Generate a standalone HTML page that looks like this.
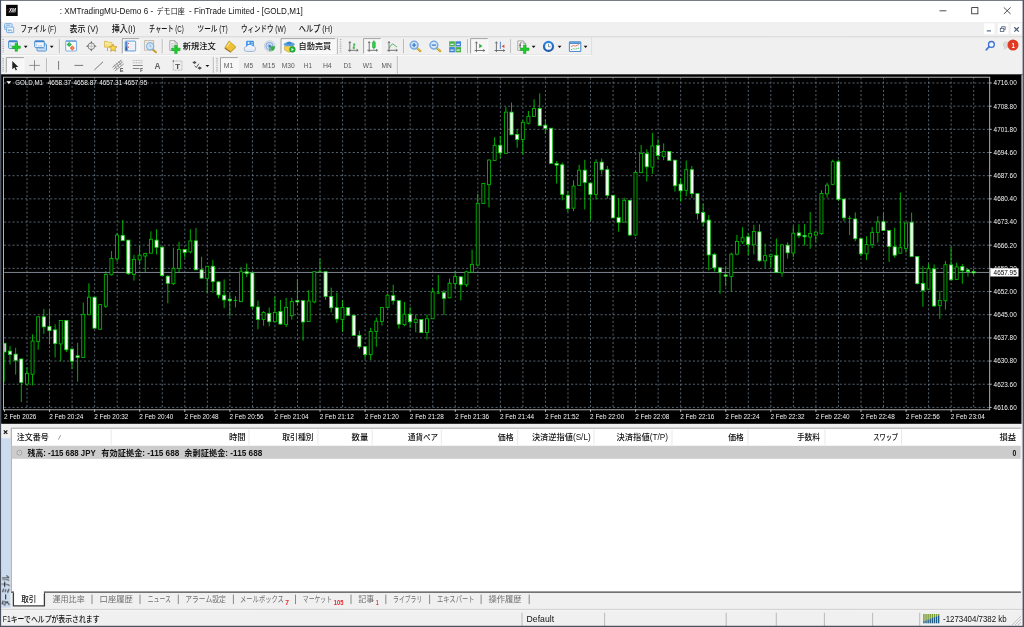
<!DOCTYPE html>
<html lang="ja"><head><meta charset="utf-8"><title>XMTradingMU-Demo 6 - GOLD,M1</title>
<style>
html,body{margin:0;padding:0;}
body{width:1024px;height:627px;overflow:hidden;background:#f0f0f0;position:relative;font-family:"Liberation Sans","Noto Sans CJK JP",sans-serif;}
svg{display:block;position:absolute;left:0;will-change:transform;}
.win{position:absolute;left:0;top:0;width:1024px;height:627px;overflow:hidden;}
.titlebar{position:absolute;left:0;top:0;width:1024px;height:22px;background:#fff;}
.menubar{position:absolute;left:0;top:22px;width:1024px;height:14px;background:#f0f0f0;}
.toolbar1{position:absolute;left:0;top:36px;width:1024px;height:19px;background:#f0f0f0;}
.toolbar2{position:absolute;left:0;top:55px;width:1024px;height:19px;background:#f0f0f0;}
.chartwrap{position:absolute;left:0;top:74px;width:1024px;height:350px;}
.terminal{position:absolute;left:0;top:424px;width:1024px;height:184px;background:#f0f0f0;}
.statusbar{position:absolute;left:0;top:608px;width:1024px;height:19px;background:#f0f0f0;}
.frame{position:absolute;left:0;top:0;pointer-events:none;}
.titlebar svg,.menubar svg,.toolbar1 svg,.toolbar2 svg,.chartwrap svg,.terminal svg,.statusbar svg{top:0;}
</style></head><body>
<div class="win">
<div class="titlebar">
<svg width="1024" height="22" viewBox="0 0 1024 22" font-family="Liberation Sans, Noto Sans CJK JP, sans-serif">
<rect x="6.1" y="4.8" width="11.6" height="11.2" fill="#050505"/>
<path d="M7.6 8.8l1.1 1l-1.1 1z" fill="#e0182d"/>
<text x="8.90" y="11.92" font-size="5.6" fill="#fff" font-weight="700" textLength="6.90" lengthAdjust="spacingAndGlyphs" font-style="italic">XM</text>
<rect x="8.5" y="11.9" width="7" height="0.6" fill="#8a8a8a"/>
<text x="59.80" y="14.10" font-size="8.6" fill="#151515" textLength="93.40" lengthAdjust="spacingAndGlyphs">: XMTradingMU-Demo 6 -</text>
<text x="156.60" y="13.94" font-size="7.6" fill="#151515" textLength="28.10" lengthAdjust="spacingAndGlyphs">デモ口座</text>
<text x="189.00" y="14.10" font-size="8.6" fill="#151515" textLength="113.70" lengthAdjust="spacingAndGlyphs">- FinTrade Limited - [GOLD,M1]</text>
<path d="M939.5 10.8h6.9" stroke="#222" stroke-width="0.8" fill="none"/>
<rect x="971.7" y="7.6" width="6.2" height="6.2" stroke="#222" stroke-width="0.8" fill="none"/>
<path d="M1003.8 7.4l6.8 6.6M1010.6 7.4l-6.8 6.6" stroke="#222" stroke-width="0.8" fill="none"/>
</svg>
</div>
<div class="menubar">
<svg width="1024" height="14" viewBox="0 22 1024 14" font-family="Liberation Sans, Noto Sans CJK JP, sans-serif">
<rect x="4.7" y="23.7" width="7.3" height="5.8" rx="0.6" fill="#f2f7fd" stroke="#6aa4e6" stroke-width="0.9"/>
<path d="M6 25.2h4.4M6 26.2v1.8" stroke="#5b9bd5" stroke-width="0.9" fill="none"/>
<rect x="6.7" y="27.1" width="7" height="5.5" rx="0.6" fill="#f2f7fd" stroke="#6aa4e6" stroke-width="0.9"/>
<path d="M8.4 29.2v1.8h1.4v-1.8M11 29.2v1.8h1.4" stroke="#5b9bd5" stroke-width="0.7" fill="none"/>
<text x="20.40" y="31.90" font-size="8.6" fill="#111" font-weight="500" textLength="35.80" lengthAdjust="spacingAndGlyphs">ファイル (F)</text>
<text x="69.50" y="31.90" font-size="8.6" fill="#111" font-weight="500" textLength="28.60" lengthAdjust="spacingAndGlyphs">表示 (V)</text>
<text x="111.80" y="31.90" font-size="8.6" fill="#111" font-weight="500" textLength="23.70" lengthAdjust="spacingAndGlyphs">挿入(I)</text>
<text x="149.10" y="31.90" font-size="8.6" fill="#111" font-weight="500" textLength="34.60" lengthAdjust="spacingAndGlyphs">チャート (C)</text>
<text x="197.50" y="31.90" font-size="8.6" fill="#111" font-weight="500" textLength="30.20" lengthAdjust="spacingAndGlyphs">ツール (T)</text>
<text x="240.90" y="31.90" font-size="8.6" fill="#111" font-weight="500" textLength="45.00" lengthAdjust="spacingAndGlyphs">ウィンドウ (W)</text>
<text x="298.80" y="31.90" font-size="8.6" fill="#111" font-weight="500" textLength="33.50" lengthAdjust="spacingAndGlyphs">ヘルプ (H)</text>
<rect x="984" y="23.4" width="10.6" height="10.8" fill="#fff"/>
<rect x="997.8" y="23.4" width="10.6" height="10.8" fill="#fff"/>
<rect x="1010.9" y="23.4" width="10.6" height="10.8" fill="#fff"/>
<path d="M986.8 30.9h4.2" stroke="#4a5a78" stroke-width="1.1" fill="none"/>
<path d="M1001.6 28.3v-1.6h3.6v3h-1.4" stroke="#4a5a78" stroke-width="0.8" fill="none"/><rect x="1000.3" y="28.3" width="3.5" height="3.1" stroke="#4a5a78" stroke-width="0.8" fill="none"/>
<path d="M1014.3 27.3l4.5 4.3M1018.8 27.3l-4.5 4.3" stroke="#4a5a78" stroke-width="1.2" fill="none"/>
</svg>
</div>
<div class="toolbar1">
<svg width="1024" height="19" viewBox="0 36 1024 19" font-family="Liberation Sans, Noto Sans CJK JP, sans-serif">
<path d="M0 36.8H1024" stroke="#cfcfcf" stroke-width="0.8"/>
<g transform="translate(0 0.1)"><path d="M3.20 39V52.5" stroke="#b4b4b4" stroke-width="1.6" stroke-dasharray="0.9 0.9" fill="none"/>
<rect x="8.6" y="40.9" width="8.8" height="7.4" rx="0.9" fill="#e6f0fb" stroke="#4f8fd0" stroke-width="1"/><rect x="8.6" y="40.5" width="8.8" height="1.6" rx="0.6" fill="#3f83cf"/><path d="M10.4 43.6v3M11.6 44.8v1.8" stroke="#9bb9dc" stroke-width="0.7"/>
<path d="M15.10 43.10h2.4v2.80h2.80v2.4h-2.80v2.80h-2.4v-2.80h-2.80v-2.4h2.80z" fill="#1fcc2c" stroke="#0f9a1c" stroke-width="0.5"/>
<path d="M23.80 45.70h3.8l-1.9 2.1z" fill="#111"/>
<rect x="37" y="43.7" width="9.4" height="7.2" rx="0.9" fill="#dbe8f6" stroke="#4f8fd0" stroke-width="1"/><path d="M38.6 48.6h6.6" stroke="#8db4e0" stroke-width="0.8"/>
<rect x="34.7" y="40.9" width="9.6" height="6.6" rx="0.9" fill="#f2f7fd" stroke="#4f8fd0" stroke-width="1"/><rect x="34.7" y="40.5" width="9.6" height="1.6" rx="0.6" fill="#3f83cf"/><path d="M36.6 43.4v2.8M37.8 45.8h4.6M41 45v0.8" stroke="#9bb9dc" stroke-width="0.7" fill="none"/>
<path d="M49.80 45.70h3.8l-1.9 2.1z" fill="#111"/>
<path d="M59.40 39V53" stroke="#a8a8a8" stroke-width="0.9" fill="none"/><path d="M60.20 39V53" stroke="#fbfbfb" stroke-width="0.7" fill="none"/>
<rect x="65.7" y="41" width="10.8" height="9.9" rx="0.9" fill="#fdfdfd" stroke="#7fb2e6" stroke-width="1.1"/><path d="M66 40.9h10.2" stroke="#4f8fd0" stroke-width="0.9"/>
<path d="M69.2 41.8l2.6 2.6l-2.6 2.6l-2.6-2.6z" fill="#22b040"/><path d="M72.3 45.4l2.6 2.6l-2.6 2.6l-2.6-2.6z" fill="#f06a3c"/><path d="M69.2 43.4v2M72.3 47v2" stroke="#d9f3de" stroke-width="0.5"/>
<circle cx="91.3" cy="46.1" r="3.3" fill="none" stroke="#707070" stroke-width="0.8"/><path d="M91.3 40.6l1.1 2.6h-2.2zM91.3 51.6l1.1-2.6h-2.2zM85.8 46.1l2.6-1.1v2.2zM96.8 46.1l-2.6-1.1v2.2z" fill="#707070"/><path d="M91.3 43v6.2M88.2 46.1h6.2" stroke="#9a9a9a" stroke-width="0.5"/>
<path d="M104.5 41.2h2.8l0.9 1h3.7v4.9h-7.4z" fill="#f6e27e" stroke="#d4aa30" stroke-width="0.6"/><path d="M104.9 43.2h6.6" stroke="#fbf3b8" stroke-width="0.8"/><path d="M107.5 47.4v3.6" stroke="#8a8a8a" stroke-width="0.7"/>
<path d="M113.1 44l1.15 2.45l2.65 0.3l-1.95 1.85l0.55 2.65l-2.4-1.35l-2.4 1.35l0.55-2.65l-1.95-1.85l2.65-0.3z" fill="#f7dc4e" stroke="#c08a18" stroke-width="0.7"/>
<rect x="122.3" y="38.5" width="17.10" height="15.10" fill="#f7f7f7"/><path d="M122.3 53.6V38.5H139.4" stroke="#8e8e8e" stroke-width="0.8" fill="none"/><path d="M122.3 53.6H139.4V38.5" stroke="#fdfdfd" stroke-width="0.8" fill="none"/>
<defs><linearGradient id="tg" x1="0" y1="0" x2="0" y2="1"><stop offset="0" stop-color="#6fa9e4"/><stop offset="1" stop-color="#2c62b2"/></linearGradient></defs>
<rect x="125.1" y="41" width="10.5" height="9.8" rx="1" fill="#f6f9fe" stroke="#79aee6" stroke-width="1.1"/><rect x="125.3" y="41.3" width="2.3" height="9.2" fill="url(#tg)"/><path d="M128.2 44.6h6.9M128.2 46.6h6.9M128.2 48.6h6.9" stroke="#d3e0f3" stroke-width="0.6"/><path d="M128.5 42.8v1.1M128.5 46.6v1.1" stroke="#e8463a" stroke-width="0.9"/><path d="M126.4 42.4v1.2M126.4 47v2.6" stroke="#1b3f78" stroke-width="0.7"/>
<rect x="144.7" y="40.6" width="9" height="9.4" fill="#f7f5f0" stroke="#b3ab9b" stroke-width="0.8"/><path d="M145.2 42.2h8" stroke="#d8d2c6" stroke-width="0.7"/>
<path d="M153 49.6l3 2.6" stroke="#c79a22" stroke-width="1.8" stroke-linecap="round"/><circle cx="150.1" cy="46.2" r="3.7" fill="#cfe4f6" stroke="#74abe0" stroke-width="1"/><path d="M150.1 44.4v2h1.4" stroke="#8c9db4" stroke-width="0.6" fill="none"/>
<path d="M162.30 39V53" stroke="#a8a8a8" stroke-width="0.9" fill="none"/><path d="M163.10 39V53" stroke="#fbfbfb" stroke-width="0.7" fill="none"/>
<path d="M169.8 40.6h5l2.5 2.5v7.1h-7.5z" fill="#fbfbfb" stroke="#858585" stroke-width="0.7"/><path d="M174.8 40.6v2.5h2.5" fill="none" stroke="#858585" stroke-width="0.6"/><path d="M171 43.3h2.6M171 45h4.8M171 46.7h4.8M171 48.4h2" stroke="#9a9a9a" stroke-width="0.6"/>
<path d="M174.65 45.10h2.5v2.95h2.95v2.5h-2.95v2.95h-2.5v-2.95h-2.95v-2.5h2.95z" fill="#1fcc2c" stroke="#0f9a1c" stroke-width="0.5"/>
<path d="M224.9 47.4l4.2-6.6l6.6 5.8l-4.9 5z" fill="#eec238" stroke="#b98a1c" stroke-width="0.6"/><path d="M224.9 47.4l5.9 4.2l-0.2 1.1l-6-4.1z" fill="#9a6a1a"/><path d="M230.8 51.6l4.9-5l0.1 1l-5.2 5.1z" fill="#c8962a"/><path d="M227.4 46.4l2.4-3.8" stroke="#fdeea0" stroke-width="1"/>
<path d="M246.6 51.4a2.5 2.5 0 0 1 0.1-5a3.4 3.4 0 0 1 6.4-0.6a2.9 2.9 0 0 1 0.5 5.6z" fill="#e1e8f2" stroke="#8ea3c2" stroke-width="0.7"/>
<rect x="246.1" y="40.7" width="7.8" height="6" rx="1" fill="#3f92e6"/><circle cx="248.6" cy="42.8" r="1.05" fill="#eaf4fe"/><path d="M246.9 46.4q1.7-2.6 3.4 0z" fill="#eaf4fe"/><path d="M250.8 42.6h2.2M250.8 44.2h2.2" stroke="#eaf4fe" stroke-width="0.6"/>
<path d="M245.4 49.2a2 2 0 0 1 1.6-2.6a3.2 3.2 0 0 1 5.8-0.4a2.6 2.6 0 0 1 2.2 3z" fill="#eef2f8" stroke="none"/>
<circle cx="269.7" cy="46" r="5.4" fill="#e4e9f0" stroke="#b4bfcd" stroke-width="0.6"/><circle cx="269.5" cy="45.9" r="3.6" fill="none" stroke="#6d9bd8" stroke-width="0.9"/><circle cx="269.5" cy="45.9" r="1.9" fill="none" stroke="#8fb2e2" stroke-width="0.6"/>
<path d="M270.4 46.2l4.6 0a5 5 0 0 1 -3.4 5z" fill="#3aae4a"/><path d="M270 46v5.2" stroke="#2f9a40" stroke-width="1.1"/><circle cx="269.6" cy="45.8" r="1.2" fill="#3c78cf"/>
<rect x="281" y="38.5" width="54.30" height="15.10" fill="#f7f7f7"/><path d="M281 53.6V38.5H335.3" stroke="#8e8e8e" stroke-width="0.8" fill="none"/><path d="M281 53.6H335.3V38.5" stroke="#fdfdfd" stroke-width="0.8" fill="none"/>
<path d="M284.4 46.2l4.6-1.2l5 1.6l-0.6 4.4l-4.6 1.2l-4.2-2.2z" fill="#f3d04e" stroke="#b8921f" stroke-width="0.5"/><ellipse cx="289.2" cy="44.2" rx="5.4" ry="2" fill="#5aa2e0"/><ellipse cx="289.2" cy="42.9" rx="2.6" ry="1.5" fill="#3d86cf"/><circle cx="292.4" cy="49.3" r="2.9" fill="#21b43a" stroke="#128a26" stroke-width="0.4"/><path d="M291.5 47.8l2.4 1.5l-2.4 1.5z" fill="#fff"/>
<path d="M337.60 38V54" stroke="#a8a8a8" stroke-width="0.9" fill="none"/><path d="M338.40 38V54" stroke="#fbfbfb" stroke-width="0.7" fill="none"/>
<path d="M340.60 39V52.5" stroke="#b4b4b4" stroke-width="1.6" stroke-dasharray="0.9 0.9" fill="none"/>
<path d="M349.8 41.80V51.80M348.00 50.2H358.00" stroke="#555" stroke-width="0.8" fill="none"/><path d="M348.70 43.00L349.8 41.40L350.90 43.00M356.60 49.10L358.20 50.2L356.60 51.30" stroke="#555" stroke-width="0.7" fill="none"/>
<path d="M354 43.4v5.4M354 44.2h1.3M352.7 47.8h1.3" stroke="#2fae3d" stroke-width="1.2" fill="none"/>
<rect x="363.6" y="38.5" width="17.30" height="15.10" fill="#f7f7f7"/><path d="M363.6 53.6V38.5H380.9" stroke="#8e8e8e" stroke-width="0.8" fill="none"/><path d="M363.6 53.6H380.9V38.5" stroke="#fdfdfd" stroke-width="0.8" fill="none"/>
<path d="M369.2 41.80V51.80M367.40 50.2H377.40" stroke="#555" stroke-width="0.8" fill="none"/><path d="M368.10 43.00L369.2 41.40L370.30 43.00M376.00 49.10L377.60 50.2L376.00 51.30" stroke="#555" stroke-width="0.7" fill="none"/>
<path d="M373.9 40.2v9" stroke="#1f9a30" stroke-width="0.7"/><rect x="372.5" y="41.6" width="2.8" height="6.2" rx="0.7" fill="#2fd04a" stroke="#1f9a30" stroke-width="0.5"/>
<path d="M389 41.80V51.80M387.20 50.2H397.20" stroke="#555" stroke-width="0.8" fill="none"/><path d="M387.90 43.00L389 41.40L390.10 43.00M395.80 49.10L397.40 50.2L395.80 51.30" stroke="#555" stroke-width="0.7" fill="none"/>
<path d="M389.2 48.2q1.4-3.6 3.6-4.4l4.2 3.2" stroke="#3aa646" stroke-width="0.8" fill="none"/>
<path d="M403.70 39V53" stroke="#a8a8a8" stroke-width="0.9" fill="none"/><path d="M404.50 39V53" stroke="#fbfbfb" stroke-width="0.7" fill="none"/>
<path d="M417.00 48.00L420.40 51.00" stroke="#c49a24" stroke-width="2.2" stroke-linecap="round"/><path d="M417.20 47.90L420.40 50.70" stroke="#f0d45c" stroke-width="0.9" stroke-linecap="round"/><circle cx="414.1" cy="45.0" r="3.7" fill="#dcebfa" stroke="#7fb0e6" stroke-width="1.3"/><circle cx="414.1" cy="45.0" r="4.3" fill="none" stroke="#4f8fd6" stroke-width="0.4"/><path d="M412.00 45.0h4.2M414.1 42.90v4.2" stroke="#3c78c8" stroke-width="1.3"/>
<path d="M436.80 48.00L440.20 51.00" stroke="#c49a24" stroke-width="2.2" stroke-linecap="round"/><path d="M437.00 47.90L440.20 50.70" stroke="#f0d45c" stroke-width="0.9" stroke-linecap="round"/><circle cx="433.9" cy="45.0" r="3.7" fill="#dcebfa" stroke="#7fb0e6" stroke-width="1.3"/><circle cx="433.9" cy="45.0" r="4.3" fill="none" stroke="#4f8fd6" stroke-width="0.4"/><path d="M431.80 45.0h4.2" stroke="#3c78c8" stroke-width="1.3"/>
<rect x="449.2" y="41.2" width="5.6" height="5.2" fill="#4bb04a"/><rect x="455.4" y="41.2" width="5.6" height="5.2" fill="#3f80d8"/><rect x="449.2" y="47" width="5.6" height="5.2" fill="#3f80d8"/><rect x="455.4" y="47" width="5.6" height="5.2" fill="#4bb04a"/>
<path d="M450.4 44.2h3.2M456.6 44.2h3.2M450.4 50h3.2M456.6 50h3.2" stroke="#e8f0fa" stroke-width="1.3"/>
<path d="M467.50 39V53" stroke="#a8a8a8" stroke-width="0.9" fill="none"/><path d="M468.30 39V53" stroke="#fbfbfb" stroke-width="0.7" fill="none"/>
<rect x="470.6" y="38.5" width="17.30" height="15.10" fill="#f7f7f7"/><path d="M470.6 53.6V38.5H487.9" stroke="#8e8e8e" stroke-width="0.8" fill="none"/><path d="M470.6 53.6H487.9V38.5" stroke="#fdfdfd" stroke-width="0.8" fill="none"/>
<path d="M476.4 42.00V52.00M474.60 50.4H484.60" stroke="#555" stroke-width="0.8" fill="none"/><path d="M475.30 43.20L476.4 41.60L477.50 43.20M483.20 49.30L484.80 50.4L483.20 51.50" stroke="#555" stroke-width="0.7" fill="none"/>
<path d="M479.2 43.6l3.2 2.3l-3.2 2.3z" fill="#2fae3d"/>
<path d="M496.4 42.00V52.00M494.60 50.4H504.60" stroke="#555" stroke-width="0.8" fill="none"/><path d="M495.30 43.20L496.4 41.60L497.50 43.20M503.20 49.30L504.80 50.4L503.20 51.50" stroke="#555" stroke-width="0.7" fill="none"/>
<path d="M500.4 41.6v7.2" stroke="#3b7fd0" stroke-width="0.9"/><path d="M504.4 44.4l-2.8 1.7l2.8 1.7z" fill="#e0482e"/>
<path d="M510.80 39V53" stroke="#a8a8a8" stroke-width="0.9" fill="none"/><path d="M511.60 39V53" stroke="#fbfbfb" stroke-width="0.7" fill="none"/>
<path d="M517.8 40.8h5.4l2.6 2.6v6.8h-8z" fill="#f8f8f8" stroke="#858585" stroke-width="0.7"/><path d="M523.2 40.8v2.6h2.6" fill="none" stroke="#858585" stroke-width="0.6"/><path d="M521.6 42.6q-1.4-0.4-1.5 1v4.6M519.2 45.2h2" stroke="#444" stroke-width="0.8" fill="none"/>
<path d="M523.45 44.80h2.5v3.05h3.05v2.5h-3.05v3.05h-2.5v-3.05h-3.05v-2.5h3.05z" fill="#1fcc2c" stroke="#0f9a1c" stroke-width="0.5"/>
<path d="M531.70 45.70h3.8l-1.9 2.1z" fill="#111"/>
<defs><linearGradient id="ck" x1="0" y1="0" x2="0" y2="1"><stop offset="0" stop-color="#2f86e0"/><stop offset="1" stop-color="#1a56a8"/></linearGradient></defs><circle cx="548.5" cy="46.3" r="4.5" fill="#f6f9fd" stroke="url(#ck)" stroke-width="2.2"/><path d="M548.5 43.8v2.8h2.2" stroke="#6a7a8e" stroke-width="0.8" fill="none"/>
<path d="M557.70 45.70h3.8l-1.9 2.1z" fill="#111"/>
<rect x="569.4" y="41.6" width="11.4" height="9.8" rx="0.8" fill="#f4f8fd" stroke="#4f8fd0" stroke-width="1.1"/><rect x="569.9" y="42.1" width="10.4" height="1.8" fill="#4f8fd0"/><path d="M571 46.6l2.4-1.2l2 0.6l3.6-1.6" stroke="#e0683a" stroke-width="0.8" fill="none"/><path d="M571 49.6l2.4-1l2 0.4l3.6-1" stroke="#3fae4a" stroke-width="0.8" fill="none" stroke-dasharray="1.2 0.6"/>
<path d="M583.70 45.70h3.8l-1.9 2.1z" fill="#111"/>
<path d="M0 54.9H591.6V37" stroke="#d9d9d9" stroke-width="0.8" fill="none"/>
<path d="M986.3 49.7l3-3.3" stroke="#3b6fd0" stroke-width="1.7" stroke-linecap="round"/><circle cx="991.4" cy="44.3" r="2.9" fill="#f4f8ff" stroke="#3b6fd0" stroke-width="1.3"/>
<path d="M1003.2 44.6a3.2 2.8 0 0 1 6.4 0a3.2 2.8 0 0 1 -3.4 2.8l-1.6 1.8l0.2-2.2a3 2.6 0 0 1 -1.6-2.4z" fill="#dcdcdc" stroke="#c2c2c2" stroke-width="0.5"/>
<circle cx="1013" cy="44.9" r="5.5" fill="#e03a22"/></g>
<text x="182.80" y="48.89" font-size="8.3" fill="#111" font-weight="500" textLength="33.00" lengthAdjust="spacingAndGlyphs">新規注文</text>
<text x="298.60" y="48.89" font-size="8.3" fill="#111" font-weight="500" textLength="32.60" lengthAdjust="spacingAndGlyphs">自動売買</text>
<text x="1011.40" y="47.84" font-size="7.6" fill="#fff" font-weight="700" textLength="3.40" lengthAdjust="spacingAndGlyphs">1</text>
</svg>
</div>
<div class="toolbar2">
<svg width="1024" height="19" viewBox="0 55 1024 19" font-family="Liberation Sans, Noto Sans CJK JP, sans-serif">
<path d="M0 55.5H592" stroke="#fcfcfc" stroke-width="0.8"/>
<path d="M3.20 58V71.5" stroke="#b4b4b4" stroke-width="1.6" stroke-dasharray="0.9 0.9" fill="none"/>
<rect x="6.3" y="57.6" width="17.70" height="15.20" fill="#f7f7f7"/><path d="M6.3 72.8V57.6H24" stroke="#8e8e8e" stroke-width="0.8" fill="none"/><path d="M6.3 72.8H24V57.6" stroke="#fdfdfd" stroke-width="0.8" fill="none"/>
<path d="M12.3 60.9v8.4l2.1-1.9l1.4 3l1.2-0.6l-1.4-2.9h2.7z" fill="#222"/>
<path d="M34.5 60.2v10.4M29.3 65.4h10.6" stroke="#7a7a7a" stroke-width="0.8"/>
<path d="M46.60 58V72" stroke="#a8a8a8" stroke-width="0.9" fill="none"/><path d="M47.40 58V72" stroke="#fbfbfb" stroke-width="0.7" fill="none"/>
<path d="M58.6 61v8.8" stroke="#777" stroke-width="1"/>
<path d="M74.5 65.4h8.7" stroke="#777" stroke-width="1"/>
<path d="M94.3 70l8.7-8.2" stroke="#777" stroke-width="1"/>
<path d="M112.4 67.4l9-7.2M113.6 69.2l9-7.2M114.8 71l9-7.2" stroke="#6e6e6e" stroke-width="0.7" fill="none"/><path d="M114.2 64.6l2.6 4.6M116.4 62.8l2.6 4.6M118.6 61l2.6 4.6M120.4 60l1.4 2.6" stroke="#7a7a7a" stroke-width="0.6" fill="none"/>
<text x="119.90" y="71.77" font-size="5.2" fill="#3c3c3c" font-weight="700" textLength="3.40" lengthAdjust="spacingAndGlyphs">E</text>
<path d="M132.8 60.6h9.9M132.8 62.8h9.9" stroke="#9c9c9c" stroke-width="0.7" stroke-dasharray="1 0.6"/><path d="M132.8 65.5h9.9M132.8 68.5h6.6" stroke="#6a6a6a" stroke-width="0.8"/>
<text x="140.20" y="71.97" font-size="5.2" fill="#3c3c3c" font-weight="700" textLength="2.60" lengthAdjust="spacingAndGlyphs">F</text>
<text x="154.60" y="69.08" font-size="9.4" fill="#5c5c5c" font-weight="700" textLength="6.00" lengthAdjust="spacingAndGlyphs">A</text>
<rect x="173.3" y="61" width="8.6" height="9.2" fill="none" stroke="#808080" stroke-width="0.6" stroke-dasharray="0.8 0.6"/><rect x="172.7" y="60.4" width="1.2" height="1.2" fill="#555"/>
<text x="175.00" y="68.78" font-size="8" fill="#505050" font-weight="700" textLength="5.20" lengthAdjust="spacingAndGlyphs">T</text>
<path d="M194.5 60.9l2.2 1.6l-2.2 1.6l-2.2-1.6zM199.7 66.5l2.2 1.6l-2.2 1.6l-2.2-1.6z" fill="#4c4c4c"/><path d="M194.6 65.6l1.7 1.9l2.6-3.8" stroke="#4c4c4c" stroke-width="0.9" fill="none"/>
<path d="M205.50 64.90h3.8l-1.9 2.1z" fill="#111"/>
<path d="M213.40 57V73" stroke="#a8a8a8" stroke-width="0.9" fill="none"/><path d="M214.20 57V73" stroke="#fbfbfb" stroke-width="0.7" fill="none"/>
<path d="M217.00 58V71.5" stroke="#b4b4b4" stroke-width="1.6" stroke-dasharray="0.9 0.9" fill="none"/>
<rect x="220.5" y="57.6" width="17.50" height="15.20" fill="#f7f7f7"/><path d="M220.5 72.8V57.6H238" stroke="#8e8e8e" stroke-width="0.8" fill="none"/><path d="M220.5 72.8H238V57.6" stroke="#fdfdfd" stroke-width="0.8" fill="none"/>
<text x="223.80" y="68.08" font-size="6.9" fill="#5a5a5a" textLength="9.60" lengthAdjust="spacingAndGlyphs">M1</text>
<text x="244.00" y="68.08" font-size="6.9" fill="#5a5a5a" textLength="9.10" lengthAdjust="spacingAndGlyphs">M5</text>
<text x="262.20" y="68.08" font-size="6.9" fill="#5a5a5a" textLength="12.90" lengthAdjust="spacingAndGlyphs">M15</text>
<text x="281.70" y="68.08" font-size="6.9" fill="#5a5a5a" textLength="12.90" lengthAdjust="spacingAndGlyphs">M30</text>
<text x="303.80" y="68.08" font-size="6.9" fill="#5a5a5a" textLength="8.20" lengthAdjust="spacingAndGlyphs">H1</text>
<text x="322.90" y="68.08" font-size="6.9" fill="#5a5a5a" textLength="8.80" lengthAdjust="spacingAndGlyphs">H4</text>
<text x="343.40" y="68.08" font-size="6.9" fill="#5a5a5a" textLength="8.30" lengthAdjust="spacingAndGlyphs">D1</text>
<text x="362.80" y="68.08" font-size="6.9" fill="#5a5a5a" textLength="10.00" lengthAdjust="spacingAndGlyphs">W1</text>
<text x="381.50" y="68.08" font-size="6.9" fill="#5a5a5a" textLength="10.20" lengthAdjust="spacingAndGlyphs">MN</text>
<path d="M397.40 56V74" stroke="#a8a8a8" stroke-width="0.9" fill="none"/><path d="M398.20 56V74" stroke="#fbfbfb" stroke-width="0.7" fill="none"/>
</svg>
</div>
<div class="chartwrap">
<svg class="chart" width="1024" height="350" viewBox="0 74 1024 350">
<rect x="0" y="74" width="1024" height="350" fill="#f0f0f0"/>
<rect x="0" y="74" width="1024" height="1.2" fill="#6e6e6e"/>
<rect x="1.1" y="74.7" width="1020.6" height="349.1" fill="#000"/>
<rect x="1021.7" y="74.7" width="1.2" height="349.1" fill="#dedede"/>
<path d="M4.1 83.00H989.7 M4.1 106.17H989.7 M4.1 129.34H989.7 M4.1 152.52H989.7 M4.1 175.69H989.7 M4.1 198.86H989.7 M4.1 222.03H989.7 M4.1 245.20H989.7 M4.1 268.38H989.7 M4.1 291.55H989.7 M4.1 314.72H989.7 M4.1 337.89H989.7 M4.1 361.06H989.7 M4.1 384.24H989.7 M4.1 407.41H989.7 M973.70 77.3V409.6 M951.16 77.3V409.6 M928.62 77.3V409.6 M906.08 77.3V409.6 M883.54 77.3V409.6 M861.00 77.3V409.6 M838.46 77.3V409.6 M815.92 77.3V409.6 M793.38 77.3V409.6 M770.84 77.3V409.6 M748.30 77.3V409.6 M725.76 77.3V409.6 M703.22 77.3V409.6 M680.68 77.3V409.6 M658.14 77.3V409.6 M635.60 77.3V409.6 M613.06 77.3V409.6 M590.52 77.3V409.6 M567.98 77.3V409.6 M545.44 77.3V409.6 M522.90 77.3V409.6 M500.36 77.3V409.6 M477.82 77.3V409.6 M455.28 77.3V409.6 M432.74 77.3V409.6 M410.20 77.3V409.6 M387.66 77.3V409.6 M365.12 77.3V409.6 M342.58 77.3V409.6 M320.04 77.3V409.6 M297.50 77.3V409.6 M274.96 77.3V409.6 M252.42 77.3V409.6 M229.88 77.3V409.6 M207.34 77.3V409.6 M184.80 77.3V409.6 M162.26 77.3V409.6 M139.72 77.3V409.6 M117.18 77.3V409.6 M94.64 77.3V409.6 M72.10 77.3V409.6 M49.56 77.3V409.6 M27.02 77.3V409.6" fill="none" stroke="#778899" stroke-width="0.75" stroke-dasharray="2.1 2.1" opacity="0.95"/>
<rect x="3.5" y="77.2" width="986.2" height="332.6" fill="none" stroke="#c4c4c4" stroke-width="0.9"/>
<path d="M989.8 83.00h1.9 M989.8 106.17h1.9 M989.8 129.34h1.9 M989.8 152.52h1.9 M989.8 175.69h1.9 M989.8 198.86h1.9 M989.8 222.03h1.9 M989.8 245.20h1.9 M989.8 268.38h1.9 M989.8 291.55h1.9 M989.8 314.72h1.9 M989.8 337.89h1.9 M989.8 361.06h1.9 M989.8 384.24h1.9 M989.8 407.41h1.9 M951.16 409.7v2.2 M906.08 409.7v2.2 M861.00 409.7v2.2 M815.92 409.7v2.2 M770.84 409.7v2.2 M725.76 409.7v2.2 M680.68 409.7v2.2 M635.60 409.7v2.2 M590.52 409.7v2.2 M545.44 409.7v2.2 M500.36 409.7v2.2 M455.28 409.7v2.2 M410.20 409.7v2.2 M365.12 409.7v2.2 M320.04 409.7v2.2 M274.96 409.7v2.2 M229.88 409.7v2.2 M184.80 409.7v2.2 M139.72 409.7v2.2 M94.64 409.7v2.2 M49.56 409.7v2.2 M4.48 409.7v2.2" fill="none" stroke="#e8e8e8" stroke-width="0.8"/>
<path d="M4.3 272.45H989.8" stroke="#8a94a0" stroke-width="0.9"/>
<g clip-path="url(#cc)">
<defs><clipPath id="cc"><rect x="4.3" y="77.7" width="985" height="331.5"/></clipPath></defs>
<path d="M4.38 343.26V343.26M4.38 351.97V382.11 M10.02 346.10V351.13M10.02 354.48V364.53 M15.65 347.78V354.14M15.65 360.34V374.58 M21.29 358.67V359.00M21.29 382.45V402.04 M26.92 367.37V373.40M26.92 384.12V384.96 M32.56 334.38V341.08M32.56 374.24V385.46 M38.19 316.29V316.80M38.19 341.58V349.79 M43.83 308.92V316.80M43.83 326.84V333.88 M49.46 309.76V326.51M49.46 330.70V344.43 M55.10 324.33V329.86M55.10 343.59V357.49 M60.73 320.15V320.48M60.73 343.93V361.18 M66.37 320.48V320.48M66.37 349.79V351.97 M72.00 348.62V349.12M72.00 361.18V369.05 M77.64 342.75V355.82M77.64 357.33V381.61 M83.27 302.56V314.28M83.27 357.49V357.83 M88.91 283.30V297.20M88.91 314.79V314.79 M94.54 297.20V297.20M94.54 328.18V328.18 M100.18 304.10V304.60M100.18 329.22V329.72 M105.81 271.10V274.45M105.81 306.27V307.95 M111.45 251.01V258.54M111.45 274.79V275.63 M117.08 233.09V235.10M117.08 258.88V261.89 M122.72 220.02V235.43M122.72 240.46V240.96 M128.35 240.12V240.12M128.35 273.62V274.96 M133.99 254.86V259.38M133.99 274.45V280.65 M139.62 245.98V255.19M139.62 259.88V265.24 M145.26 252.68V253.52M145.26 256.03V271.94 M150.89 231.25V239.28M150.89 253.18V253.52 M156.53 229.24V240.12M156.53 247.32V254.36 M162.16 247.16V247.16M162.16 275.63V276.13 M167.80 275.63V276.13M167.80 283.33V303.26 M173.43 247.66V268.26M173.43 283.67V285.01 M179.07 241.80V249.33M179.07 268.59V272.78 M184.70 249.00V249.33M184.70 252.35V257.71 M190.34 229.24V240.96M190.34 251.84V253.52 M195.97 227.94V240.84M195.97 269.81V269.81 M201.61 256.75V269.81M201.61 278.18V278.52 M207.24 265.96V266.29M207.24 278.52V293.26 M212.88 260.10V266.29M212.88 281.53V292.75 M218.51 281.53V281.87M218.51 294.93V298.28 M224.15 279.36V295.27M224.15 299.96V308.16 M229.78 292.75V299.12M229.78 300.79V316.20 M235.42 296.10V299.96M235.42 300.96V307.49 M233.62 300.46h3.60 M235.42 299.96V300.96 M241.05 266.80V271.82M241.05 301.63V302.30 M246.69 263.45V271.82M246.69 273.50V277.18 M252.32 272.66V272.99M252.32 306.49V309.00 M257.96 300.63V306.99M257.96 319.55V329.26 M263.59 311.18V312.35M263.59 319.55V325.75 M269.23 307.49V313.35M269.23 321.73V326.25 M274.86 296.61V312.35M274.86 321.73V322.06 M280.50 299.96V311.51M280.50 324.07V324.58 M286.13 297.78V307.33M286.13 324.58V327.09 M291.77 297.78V301.46M291.77 315.70V319.55 M297.40 279.36V300.63M297.40 301.97V305.32 M303.04 300.70V300.70M303.04 321.97V340.72 M308.67 290.15V301.03M308.67 321.63V321.63 M314.31 271.39V271.72M314.31 301.87V303.21 M319.94 258.66V271.39M319.94 272.23V272.23 M318.14 271.81h3.60 M319.94 271.39V272.23 M325.58 271.72V271.72M325.58 296.51V299.86 M331.21 287.63V296.51M331.21 307.73V312.42 M336.85 292.66V307.73M336.85 318.95V322.80 M342.48 300.19V307.40M342.48 319.45V332.01 M348.12 307.40V307.73M348.12 315.27V316.10 M353.75 314.93V315.27M353.75 335.36V335.70 M359.38 330.67V335.36M359.38 346.75V348.76 M365.02 346.25V346.75M365.02 354.62V358.81 M370.66 327.83V331.51M370.66 354.62V359.98 M376.29 317.44V321.13M376.29 331.51V346.75 M381.93 306.89V307.40M381.93 321.46V325.65 M387.56 294.00V295.17M387.56 307.40V308.23 M393.20 284.79V295.67M393.20 300.70V304.72 M398.83 300.19V300.70M398.83 324.14V328.67 M404.47 301.99V314.22M404.47 324.60V326.27 M410.10 307.01V314.22M410.10 321.75V327.95 M415.74 314.55V319.24M415.74 322.59V332.14 M421.37 319.58V319.58M421.37 332.64V332.64 M427.00 314.55V318.74M427.00 332.64V339.67 M432.64 288.26V291.94M432.64 318.74V319.07 M438.28 274.86V292.44M438.28 293.62V293.62 M436.48 293.03h3.60 M438.28 292.44V293.62 M443.91 289.93V292.78M443.91 298.31V315.05 M449.55 278.54V283.23M449.55 297.80V298.31 M455.18 271.01V276.53M455.18 283.57V288.59 M460.82 276.03V276.87M460.82 284.74V300.32 M466.45 270.67V271.84M466.45 284.74V286.92 M472.09 249.74V264.31M472.09 272.18V272.68 M477.72 193.59V203.31M477.72 265.10V265.61 M483.36 183.14V183.48M483.36 203.57V203.91 M488.99 159.53V160.03M488.99 184.65V207.43 M494.63 137.25V145.29M494.63 160.36V160.87 M500.26 136.08V145.29M500.26 152.83V158.19 M505.90 106.77V112.13M505.90 153.33V153.67 M511.53 102.58V112.13M511.53 134.74V135.24 M517.16 128.88V134.41M517.16 139.43V147.80 M522.80 120.17V122.35M522.80 139.43V154.50 M528.44 110.96V116.32M528.44 123.18V124.36 M534.07 99.24V108.45M534.07 116.49V116.82 M539.71 93.37V108.45M539.71 125.70V126.03 M545.34 119.33V125.19M545.34 128.54V133.57 M550.98 128.21V128.21M550.98 163.38V163.71 M556.61 160.96V163.47M556.61 165.15V183.57 M562.25 162.63V164.81M562.25 194.45V200.32 M567.88 191.10V195.29M567.88 208.69V212.04 M573.52 180.22V186.08M573.52 208.19V211.20 M579.15 164.81V170.17M579.15 185.58V186.08 M584.79 159.79V170.17M584.79 182.40V209.53 M590.42 182.40V183.07M590.42 194.45V220.41 M596.06 159.28V162.30M596.06 194.45V199.48 M601.69 158.45V162.13M601.69 169.84V174.36 M607.33 165.98V169.67M607.33 195.29V198.64 M612.96 194.96V195.29M612.96 217.90V218.24 M618.60 198.31V217.57M618.60 222.59V231.63 M624.23 197.80V200.32M624.23 222.09V222.42 M629.87 199.98V200.32M629.87 234.98V236.32 M635.50 171.01V172.35M635.50 234.98V235.82 M641.13 145.05V153.42M641.13 172.68V173.18 M646.77 149.24V153.76M646.77 166.82V181.56 M652.40 132.85V145.91M652.40 167.18V173.88 M658.04 139.21V145.41M658.04 155.46V160.15 M663.67 143.40V151.44M663.67 156.46V160.15 M669.31 151.44V151.44M669.31 160.48V160.98 M674.95 160.15V160.15M674.95 185.77V191.63 M680.58 178.57V184.09M680.58 190.79V201.68 M686.22 160.48V169.69M686.22 190.29V196.15 M691.85 166.01V169.69M691.85 193.64V197.83 M697.49 193.64V193.64M697.49 213.40V219.60 M703.12 203.69V212.57M703.12 222.11V226.63 M708.76 215.10V220.12M708.76 254.96V270.36 M714.39 252.78V254.45M714.39 267.85V271.54 M720.03 267.52V267.85M720.03 272.54V293.81 M725.66 266.18V274.89M725.66 276.23V286.27 M731.30 252.78V254.12M731.30 276.56V291.80 M736.93 234.86V241.56M736.93 254.12V255.29 M742.57 227.32V237.71M742.57 241.89V243.90 M748.20 233.18V236.87M748.20 244.41V255.29 M753.84 224.81V231.51M753.84 244.74V254.45 M759.47 224.31V231.84M759.47 260.82V261.99 M765.11 243.57V255.63M765.11 260.82V268.19 M770.74 253.95V254.79M770.74 256.46V267.01 M776.38 238.54V255.29M776.38 272.37V272.88 M782.01 244.41V244.91M782.01 272.88V276.73 M787.64 242.23V245.24M787.64 252.78V258.64 M793.28 226.18V233.21M793.28 252.97V257.16 M798.91 224.17V232.88M798.91 235.72V238.24 M804.55 224.17V235.39M804.55 236.73V245.44 M810.19 211.94V233.38M810.19 237.06V248.79 M815.82 231.20V232.04M815.82 235.05V242.09 M821.46 190.17V193.52M821.46 233.71V234.89 M827.09 182.63V185.15M827.09 193.85V197.71 M832.73 159.69V161.70M832.73 184.31V185.15 M838.36 159.69V161.70M838.36 199.38V201.06 M844.00 199.05V199.05M844.00 217.80V221.49 M849.63 215.79V217.80M849.63 218.98V235.05 M847.83 218.39h3.60 M849.63 217.80V218.98 M855.26 212.44V218.98M855.26 238.74V241.25 M860.90 238.24V238.74M860.90 253.81V256.32 M866.54 236.23V244.60M866.54 253.81V260.01 M872.17 227.01V232.37M872.17 244.60V247.95 M877.81 216.17V222.03M877.81 232.58V242.63 M883.44 212.99V221.70M883.44 230.58V230.91 M889.08 230.07V230.58M889.08 246.49V261.89 M894.71 227.56V246.82M894.71 255.19V257.71 M900.35 192.56V247.66M900.35 253.18V253.52 M905.98 222.54V223.04M905.98 248.50V252.68 M911.62 212.66V222.20M911.62 256.53V256.87 M917.25 256.03V256.53M917.25 283.67V284.50 M922.88 266.08V283.33M922.88 290.36V306.78 M928.52 263.57V268.59M928.52 289.19V289.86 M934.15 264.41V268.93M934.15 305.94V307.11 M939.79 291.20V300.41M939.79 305.44V318.84 M945.43 261.06V264.74M945.43 300.75V309.62 M951.06 246.82V264.91M951.06 279.81V280.32 M956.70 262.73V266.92M956.70 279.48V279.98 M962.33 263.90V266.58M962.33 270.60V283.67 M967.97 268.59V269.93M967.97 271.61V276.63 M973.60 268.93V271.61M973.60 272.95V275.29" fill="none" stroke="#00e000" stroke-width="0.8"/>
<rect x="25.42" y="373.40" width="3.0" height="10.72" fill="#000" stroke="#00c800" stroke-width="0.8"/>
<rect x="31.06" y="341.08" width="3.0" height="33.16" fill="#000" stroke="#00c800" stroke-width="0.8"/>
<rect x="36.69" y="316.80" width="3.0" height="24.79" fill="#000" stroke="#00c800" stroke-width="0.8"/>
<rect x="59.23" y="320.48" width="3.0" height="23.45" fill="#000" stroke="#00c800" stroke-width="0.8"/>
<rect x="81.77" y="314.28" width="3.0" height="43.21" fill="#000" stroke="#00c800" stroke-width="0.8"/>
<rect x="87.41" y="297.20" width="3.0" height="17.58" fill="#000" stroke="#00c800" stroke-width="0.8"/>
<rect x="98.68" y="304.60" width="3.0" height="24.62" fill="#000" stroke="#00c800" stroke-width="0.8"/>
<rect x="104.31" y="274.45" width="3.0" height="31.82" fill="#000" stroke="#00c800" stroke-width="0.8"/>
<rect x="109.95" y="258.54" width="3.0" height="16.25" fill="#000" stroke="#00c800" stroke-width="0.8"/>
<rect x="115.58" y="235.10" width="3.0" height="23.78" fill="#000" stroke="#00c800" stroke-width="0.8"/>
<rect x="132.49" y="259.38" width="3.0" height="15.07" fill="#000" stroke="#00c800" stroke-width="0.8"/>
<rect x="138.12" y="255.19" width="3.0" height="4.69" fill="#000" stroke="#00c800" stroke-width="0.8"/>
<rect x="143.76" y="253.52" width="3.0" height="2.51" fill="#000" stroke="#00c800" stroke-width="0.8"/>
<rect x="149.39" y="239.28" width="3.0" height="13.90" fill="#000" stroke="#00c800" stroke-width="0.8"/>
<rect x="171.93" y="268.26" width="3.0" height="15.41" fill="#000" stroke="#00c800" stroke-width="0.8"/>
<rect x="177.57" y="249.33" width="3.0" height="19.26" fill="#000" stroke="#00c800" stroke-width="0.8"/>
<rect x="188.84" y="240.96" width="3.0" height="10.89" fill="#000" stroke="#00c800" stroke-width="0.8"/>
<rect x="205.74" y="266.29" width="3.0" height="12.23" fill="#000" stroke="#00c800" stroke-width="0.8"/>
<rect x="239.55" y="271.82" width="3.0" height="29.81" fill="#000" stroke="#00c800" stroke-width="0.8"/>
<rect x="262.09" y="312.35" width="3.0" height="7.20" fill="#000" stroke="#00c800" stroke-width="0.8"/>
<rect x="273.36" y="312.35" width="3.0" height="9.38" fill="#000" stroke="#00c800" stroke-width="0.8"/>
<rect x="284.63" y="307.33" width="3.0" height="17.25" fill="#000" stroke="#00c800" stroke-width="0.8"/>
<rect x="290.27" y="301.46" width="3.0" height="14.24" fill="#000" stroke="#00c800" stroke-width="0.8"/>
<rect x="307.17" y="301.03" width="3.0" height="20.60" fill="#000" stroke="#00c800" stroke-width="0.8"/>
<rect x="312.81" y="271.72" width="3.0" height="30.15" fill="#000" stroke="#00c800" stroke-width="0.8"/>
<rect x="340.98" y="307.40" width="3.0" height="12.06" fill="#000" stroke="#00c800" stroke-width="0.8"/>
<rect x="369.16" y="331.51" width="3.0" height="23.11" fill="#000" stroke="#00c800" stroke-width="0.8"/>
<rect x="374.79" y="321.13" width="3.0" height="10.38" fill="#000" stroke="#00c800" stroke-width="0.8"/>
<rect x="380.43" y="307.40" width="3.0" height="14.07" fill="#000" stroke="#00c800" stroke-width="0.8"/>
<rect x="386.06" y="295.17" width="3.0" height="12.23" fill="#000" stroke="#00c800" stroke-width="0.8"/>
<rect x="402.97" y="314.22" width="3.0" height="10.38" fill="#000" stroke="#00c800" stroke-width="0.8"/>
<rect x="414.24" y="319.24" width="3.0" height="3.35" fill="#000" stroke="#00c800" stroke-width="0.8"/>
<rect x="425.50" y="318.74" width="3.0" height="13.90" fill="#000" stroke="#00c800" stroke-width="0.8"/>
<rect x="431.14" y="291.94" width="3.0" height="26.80" fill="#000" stroke="#00c800" stroke-width="0.8"/>
<rect x="448.05" y="283.23" width="3.0" height="14.57" fill="#000" stroke="#00c800" stroke-width="0.8"/>
<rect x="453.68" y="276.53" width="3.0" height="7.03" fill="#000" stroke="#00c800" stroke-width="0.8"/>
<rect x="464.95" y="271.84" width="3.0" height="12.90" fill="#000" stroke="#00c800" stroke-width="0.8"/>
<rect x="470.59" y="264.31" width="3.0" height="7.87" fill="#000" stroke="#00c800" stroke-width="0.8"/>
<rect x="476.22" y="203.31" width="3.0" height="61.80" fill="#000" stroke="#00c800" stroke-width="0.8"/>
<rect x="481.86" y="183.48" width="3.0" height="20.10" fill="#000" stroke="#00c800" stroke-width="0.8"/>
<rect x="487.49" y="160.03" width="3.0" height="24.62" fill="#000" stroke="#00c800" stroke-width="0.8"/>
<rect x="493.13" y="145.29" width="3.0" height="15.07" fill="#000" stroke="#00c800" stroke-width="0.8"/>
<rect x="504.40" y="112.13" width="3.0" height="41.20" fill="#000" stroke="#00c800" stroke-width="0.8"/>
<rect x="521.30" y="122.35" width="3.0" height="17.08" fill="#000" stroke="#00c800" stroke-width="0.8"/>
<rect x="526.94" y="116.32" width="3.0" height="6.87" fill="#000" stroke="#00c800" stroke-width="0.8"/>
<rect x="532.57" y="108.45" width="3.0" height="8.04" fill="#000" stroke="#00c800" stroke-width="0.8"/>
<rect x="572.02" y="186.08" width="3.0" height="22.11" fill="#000" stroke="#00c800" stroke-width="0.8"/>
<rect x="577.65" y="170.17" width="3.0" height="15.41" fill="#000" stroke="#00c800" stroke-width="0.8"/>
<rect x="594.56" y="162.30" width="3.0" height="32.16" fill="#000" stroke="#00c800" stroke-width="0.8"/>
<rect x="622.73" y="200.32" width="3.0" height="21.77" fill="#000" stroke="#00c800" stroke-width="0.8"/>
<rect x="634.00" y="172.35" width="3.0" height="62.64" fill="#000" stroke="#00c800" stroke-width="0.8"/>
<rect x="639.63" y="153.42" width="3.0" height="19.26" fill="#000" stroke="#00c800" stroke-width="0.8"/>
<rect x="650.90" y="145.91" width="3.0" height="21.27" fill="#000" stroke="#00c800" stroke-width="0.8"/>
<rect x="662.17" y="151.44" width="3.0" height="5.02" fill="#000" stroke="#00c800" stroke-width="0.8"/>
<rect x="684.72" y="169.69" width="3.0" height="20.60" fill="#000" stroke="#00c800" stroke-width="0.8"/>
<rect x="729.80" y="254.12" width="3.0" height="22.44" fill="#000" stroke="#00c800" stroke-width="0.8"/>
<rect x="735.43" y="241.56" width="3.0" height="12.56" fill="#000" stroke="#00c800" stroke-width="0.8"/>
<rect x="741.07" y="237.71" width="3.0" height="4.19" fill="#000" stroke="#00c800" stroke-width="0.8"/>
<rect x="752.34" y="231.51" width="3.0" height="13.23" fill="#000" stroke="#00c800" stroke-width="0.8"/>
<rect x="763.61" y="255.63" width="3.0" height="5.19" fill="#000" stroke="#00c800" stroke-width="0.8"/>
<rect x="769.24" y="254.79" width="3.0" height="1.67" fill="#000" stroke="#00c800" stroke-width="0.8"/>
<rect x="780.51" y="244.91" width="3.0" height="27.97" fill="#000" stroke="#00c800" stroke-width="0.8"/>
<rect x="791.78" y="233.21" width="3.0" height="19.76" fill="#000" stroke="#00c800" stroke-width="0.8"/>
<rect x="808.69" y="233.38" width="3.0" height="3.68" fill="#000" stroke="#00c800" stroke-width="0.8"/>
<rect x="814.32" y="232.04" width="3.0" height="3.01" fill="#000" stroke="#00c800" stroke-width="0.8"/>
<rect x="819.96" y="193.52" width="3.0" height="40.19" fill="#000" stroke="#00c800" stroke-width="0.8"/>
<rect x="825.59" y="185.15" width="3.0" height="8.71" fill="#000" stroke="#00c800" stroke-width="0.8"/>
<rect x="831.23" y="161.70" width="3.0" height="22.61" fill="#000" stroke="#00c800" stroke-width="0.8"/>
<rect x="865.04" y="244.60" width="3.0" height="9.21" fill="#000" stroke="#00c800" stroke-width="0.8"/>
<rect x="870.67" y="232.37" width="3.0" height="12.23" fill="#000" stroke="#00c800" stroke-width="0.8"/>
<rect x="876.31" y="222.03" width="3.0" height="10.55" fill="#000" stroke="#00c800" stroke-width="0.8"/>
<rect x="898.85" y="247.66" width="3.0" height="5.53" fill="#000" stroke="#00c800" stroke-width="0.8"/>
<rect x="904.48" y="223.04" width="3.0" height="25.46" fill="#000" stroke="#00c800" stroke-width="0.8"/>
<rect x="927.02" y="268.59" width="3.0" height="20.60" fill="#000" stroke="#00c800" stroke-width="0.8"/>
<rect x="938.29" y="300.41" width="3.0" height="5.02" fill="#000" stroke="#00c800" stroke-width="0.8"/>
<rect x="943.93" y="264.74" width="3.0" height="36.01" fill="#000" stroke="#00c800" stroke-width="0.8"/>
<rect x="955.20" y="266.92" width="3.0" height="12.56" fill="#000" stroke="#00c800" stroke-width="0.8"/>
<rect x="2.78" y="343.26" width="3.2" height="8.71" fill="#fff" stroke="#10d810" stroke-width="0.8"/>
<rect x="8.42" y="351.13" width="3.2" height="3.35" fill="#fff" stroke="#10d810" stroke-width="0.8"/>
<rect x="14.05" y="354.14" width="3.2" height="6.20" fill="#fff" stroke="#10d810" stroke-width="0.8"/>
<rect x="19.69" y="359.00" width="3.2" height="23.45" fill="#fff" stroke="#10d810" stroke-width="0.8"/>
<rect x="42.23" y="316.80" width="3.2" height="10.05" fill="#fff" stroke="#10d810" stroke-width="0.8"/>
<rect x="47.86" y="326.51" width="3.2" height="4.19" fill="#fff" stroke="#10d810" stroke-width="0.8"/>
<rect x="53.50" y="329.86" width="3.2" height="13.73" fill="#fff" stroke="#10d810" stroke-width="0.8"/>
<rect x="64.77" y="320.48" width="3.2" height="29.31" fill="#fff" stroke="#10d810" stroke-width="0.8"/>
<rect x="70.40" y="349.12" width="3.2" height="12.06" fill="#fff" stroke="#10d810" stroke-width="0.8"/>
<rect x="76.04" y="355.82" width="3.2" height="1.51" fill="#fff" stroke="#10d810" stroke-width="0.8"/>
<rect x="92.94" y="297.20" width="3.2" height="30.98" fill="#fff" stroke="#10d810" stroke-width="0.8"/>
<rect x="121.12" y="235.43" width="3.2" height="5.02" fill="#fff" stroke="#10d810" stroke-width="0.8"/>
<rect x="126.75" y="240.12" width="3.2" height="33.50" fill="#fff" stroke="#10d810" stroke-width="0.8"/>
<rect x="154.93" y="240.12" width="3.2" height="7.20" fill="#fff" stroke="#10d810" stroke-width="0.8"/>
<rect x="160.56" y="247.16" width="3.2" height="28.47" fill="#fff" stroke="#10d810" stroke-width="0.8"/>
<rect x="166.20" y="276.13" width="3.2" height="7.20" fill="#fff" stroke="#10d810" stroke-width="0.8"/>
<rect x="183.10" y="249.33" width="3.2" height="3.01" fill="#fff" stroke="#10d810" stroke-width="0.8"/>
<rect x="194.37" y="240.84" width="3.2" height="28.97" fill="#fff" stroke="#10d810" stroke-width="0.8"/>
<rect x="200.01" y="269.81" width="3.2" height="8.37" fill="#fff" stroke="#10d810" stroke-width="0.8"/>
<rect x="211.28" y="266.29" width="3.2" height="15.24" fill="#fff" stroke="#10d810" stroke-width="0.8"/>
<rect x="216.91" y="281.87" width="3.2" height="13.06" fill="#fff" stroke="#10d810" stroke-width="0.8"/>
<rect x="222.55" y="295.27" width="3.2" height="4.69" fill="#fff" stroke="#10d810" stroke-width="0.8"/>
<rect x="228.18" y="299.12" width="3.2" height="1.67" fill="#fff" stroke="#10d810" stroke-width="0.8"/>
<rect x="245.09" y="271.82" width="3.2" height="1.67" fill="#fff" stroke="#10d810" stroke-width="0.8"/>
<rect x="250.72" y="272.99" width="3.2" height="33.50" fill="#fff" stroke="#10d810" stroke-width="0.8"/>
<rect x="256.36" y="306.99" width="3.2" height="12.56" fill="#fff" stroke="#10d810" stroke-width="0.8"/>
<rect x="267.62" y="313.35" width="3.2" height="8.37" fill="#fff" stroke="#10d810" stroke-width="0.8"/>
<rect x="278.89" y="311.51" width="3.2" height="12.56" fill="#fff" stroke="#10d810" stroke-width="0.8"/>
<rect x="295.80" y="300.63" width="3.2" height="1.34" fill="#fff" stroke="#10d810" stroke-width="0.8"/>
<rect x="301.44" y="300.70" width="3.2" height="21.27" fill="#fff" stroke="#10d810" stroke-width="0.8"/>
<rect x="323.98" y="271.72" width="3.2" height="24.79" fill="#fff" stroke="#10d810" stroke-width="0.8"/>
<rect x="329.61" y="296.51" width="3.2" height="11.22" fill="#fff" stroke="#10d810" stroke-width="0.8"/>
<rect x="335.25" y="307.73" width="3.2" height="11.22" fill="#fff" stroke="#10d810" stroke-width="0.8"/>
<rect x="346.51" y="307.73" width="3.2" height="7.54" fill="#fff" stroke="#10d810" stroke-width="0.8"/>
<rect x="352.15" y="315.27" width="3.2" height="20.10" fill="#fff" stroke="#10d810" stroke-width="0.8"/>
<rect x="357.78" y="335.36" width="3.2" height="11.39" fill="#fff" stroke="#10d810" stroke-width="0.8"/>
<rect x="363.42" y="346.75" width="3.2" height="7.87" fill="#fff" stroke="#10d810" stroke-width="0.8"/>
<rect x="391.60" y="295.67" width="3.2" height="5.02" fill="#fff" stroke="#10d810" stroke-width="0.8"/>
<rect x="397.23" y="300.70" width="3.2" height="23.45" fill="#fff" stroke="#10d810" stroke-width="0.8"/>
<rect x="408.50" y="314.22" width="3.2" height="7.54" fill="#fff" stroke="#10d810" stroke-width="0.8"/>
<rect x="419.77" y="319.58" width="3.2" height="13.06" fill="#fff" stroke="#10d810" stroke-width="0.8"/>
<rect x="442.31" y="292.78" width="3.2" height="5.53" fill="#fff" stroke="#10d810" stroke-width="0.8"/>
<rect x="459.22" y="276.87" width="3.2" height="7.87" fill="#fff" stroke="#10d810" stroke-width="0.8"/>
<rect x="498.66" y="145.29" width="3.2" height="7.54" fill="#fff" stroke="#10d810" stroke-width="0.8"/>
<rect x="509.93" y="112.13" width="3.2" height="22.61" fill="#fff" stroke="#10d810" stroke-width="0.8"/>
<rect x="515.56" y="134.41" width="3.2" height="5.02" fill="#fff" stroke="#10d810" stroke-width="0.8"/>
<rect x="538.11" y="108.45" width="3.2" height="17.25" fill="#fff" stroke="#10d810" stroke-width="0.8"/>
<rect x="543.74" y="125.19" width="3.2" height="3.35" fill="#fff" stroke="#10d810" stroke-width="0.8"/>
<rect x="549.38" y="128.21" width="3.2" height="35.17" fill="#fff" stroke="#10d810" stroke-width="0.8"/>
<rect x="555.01" y="163.47" width="3.2" height="1.67" fill="#fff" stroke="#10d810" stroke-width="0.8"/>
<rect x="560.65" y="164.81" width="3.2" height="29.64" fill="#fff" stroke="#10d810" stroke-width="0.8"/>
<rect x="566.28" y="195.29" width="3.2" height="13.40" fill="#fff" stroke="#10d810" stroke-width="0.8"/>
<rect x="583.19" y="170.17" width="3.2" height="12.23" fill="#fff" stroke="#10d810" stroke-width="0.8"/>
<rect x="588.82" y="183.07" width="3.2" height="11.39" fill="#fff" stroke="#10d810" stroke-width="0.8"/>
<rect x="600.09" y="162.13" width="3.2" height="7.70" fill="#fff" stroke="#10d810" stroke-width="0.8"/>
<rect x="605.73" y="169.67" width="3.2" height="25.62" fill="#fff" stroke="#10d810" stroke-width="0.8"/>
<rect x="611.36" y="195.29" width="3.2" height="22.61" fill="#fff" stroke="#10d810" stroke-width="0.8"/>
<rect x="617.00" y="217.57" width="3.2" height="5.02" fill="#fff" stroke="#10d810" stroke-width="0.8"/>
<rect x="628.26" y="200.32" width="3.2" height="34.67" fill="#fff" stroke="#10d810" stroke-width="0.8"/>
<rect x="645.17" y="153.76" width="3.2" height="13.06" fill="#fff" stroke="#10d810" stroke-width="0.8"/>
<rect x="656.44" y="145.41" width="3.2" height="10.05" fill="#fff" stroke="#10d810" stroke-width="0.8"/>
<rect x="667.71" y="151.44" width="3.2" height="9.04" fill="#fff" stroke="#10d810" stroke-width="0.8"/>
<rect x="673.35" y="160.15" width="3.2" height="25.62" fill="#fff" stroke="#10d810" stroke-width="0.8"/>
<rect x="678.98" y="184.09" width="3.2" height="6.70" fill="#fff" stroke="#10d810" stroke-width="0.8"/>
<rect x="690.25" y="169.69" width="3.2" height="23.95" fill="#fff" stroke="#10d810" stroke-width="0.8"/>
<rect x="695.88" y="193.64" width="3.2" height="19.76" fill="#fff" stroke="#10d810" stroke-width="0.8"/>
<rect x="701.52" y="212.57" width="3.2" height="9.55" fill="#fff" stroke="#10d810" stroke-width="0.8"/>
<rect x="707.16" y="220.12" width="3.2" height="34.84" fill="#fff" stroke="#10d810" stroke-width="0.8"/>
<rect x="712.79" y="254.45" width="3.2" height="13.40" fill="#fff" stroke="#10d810" stroke-width="0.8"/>
<rect x="718.43" y="267.85" width="3.2" height="4.69" fill="#fff" stroke="#10d810" stroke-width="0.8"/>
<rect x="724.06" y="274.89" width="3.2" height="1.34" fill="#fff" stroke="#10d810" stroke-width="0.8"/>
<rect x="746.60" y="236.87" width="3.2" height="7.54" fill="#fff" stroke="#10d810" stroke-width="0.8"/>
<rect x="757.87" y="231.84" width="3.2" height="28.97" fill="#fff" stroke="#10d810" stroke-width="0.8"/>
<rect x="774.77" y="255.29" width="3.2" height="17.08" fill="#fff" stroke="#10d810" stroke-width="0.8"/>
<rect x="786.04" y="245.24" width="3.2" height="7.54" fill="#fff" stroke="#10d810" stroke-width="0.8"/>
<rect x="797.31" y="232.88" width="3.2" height="2.85" fill="#fff" stroke="#10d810" stroke-width="0.8"/>
<rect x="802.95" y="235.39" width="3.2" height="1.34" fill="#fff" stroke="#10d810" stroke-width="0.8"/>
<rect x="836.76" y="161.70" width="3.2" height="37.68" fill="#fff" stroke="#10d810" stroke-width="0.8"/>
<rect x="842.39" y="199.05" width="3.2" height="18.76" fill="#fff" stroke="#10d810" stroke-width="0.8"/>
<rect x="853.66" y="218.98" width="3.2" height="19.76" fill="#fff" stroke="#10d810" stroke-width="0.8"/>
<rect x="859.30" y="238.74" width="3.2" height="15.07" fill="#fff" stroke="#10d810" stroke-width="0.8"/>
<rect x="881.84" y="221.70" width="3.2" height="8.88" fill="#fff" stroke="#10d810" stroke-width="0.8"/>
<rect x="887.48" y="230.58" width="3.2" height="15.91" fill="#fff" stroke="#10d810" stroke-width="0.8"/>
<rect x="893.11" y="246.82" width="3.2" height="8.37" fill="#fff" stroke="#10d810" stroke-width="0.8"/>
<rect x="910.01" y="222.20" width="3.2" height="34.33" fill="#fff" stroke="#10d810" stroke-width="0.8"/>
<rect x="915.65" y="256.53" width="3.2" height="27.13" fill="#fff" stroke="#10d810" stroke-width="0.8"/>
<rect x="921.28" y="283.33" width="3.2" height="7.03" fill="#fff" stroke="#10d810" stroke-width="0.8"/>
<rect x="932.55" y="268.93" width="3.2" height="37.01" fill="#fff" stroke="#10d810" stroke-width="0.8"/>
<rect x="949.46" y="264.91" width="3.2" height="14.91" fill="#fff" stroke="#10d810" stroke-width="0.8"/>
<rect x="960.73" y="266.58" width="3.2" height="4.02" fill="#fff" stroke="#10d810" stroke-width="0.8"/>
<rect x="966.37" y="269.93" width="3.2" height="1.67" fill="#fff" stroke="#10d810" stroke-width="0.8"/>
<rect x="972.00" y="271.61" width="3.2" height="1.34" fill="#fff" stroke="#10d810" stroke-width="0.8"/>
</g>
<g font-family="Liberation Sans, Arial, sans-serif" font-size="6.4" fill="#f4f4f4">
<text x="993.6" y="85.40">4716.00</text>
<text x="993.6" y="108.57">4708.80</text>
<text x="993.6" y="131.74">4701.80</text>
<text x="993.6" y="154.92">4694.60</text>
<text x="993.6" y="178.09">4687.60</text>
<text x="993.6" y="201.26">4680.40</text>
<text x="993.6" y="224.43">4673.40</text>
<text x="993.6" y="247.60">4666.20</text>
<text x="993.6" y="270.78">4659.20</text>
<text x="993.6" y="293.95">4652.00</text>
<text x="993.6" y="317.12">4645.00</text>
<text x="993.6" y="340.29">4637.80</text>
<text x="993.6" y="363.46">4630.80</text>
<text x="993.6" y="386.64">4623.60</text>
<text x="993.6" y="409.81">4616.60</text>
<text x="4.08" y="418.7">2 Feb 2026</text>
<text x="49.16" y="418.7">2 Feb 20:24</text>
<text x="94.24" y="418.7">2 Feb 20:32</text>
<text x="139.32" y="418.7">2 Feb 20:40</text>
<text x="184.40" y="418.7">2 Feb 20:48</text>
<text x="229.48" y="418.7">2 Feb 20:56</text>
<text x="274.56" y="418.7">2 Feb 21:04</text>
<text x="319.64" y="418.7">2 Feb 21:12</text>
<text x="364.72" y="418.7">2 Feb 21:20</text>
<text x="409.80" y="418.7">2 Feb 21:28</text>
<text x="454.88" y="418.7">2 Feb 21:36</text>
<text x="499.96" y="418.7">2 Feb 21:44</text>
<text x="545.04" y="418.7">2 Feb 21:52</text>
<text x="590.12" y="418.7">2 Feb 22:00</text>
<text x="635.20" y="418.7">2 Feb 22:08</text>
<text x="680.28" y="418.7">2 Feb 22:16</text>
<text x="725.36" y="418.7">2 Feb 22:24</text>
<text x="770.44" y="418.7">2 Feb 22:32</text>
<text x="815.52" y="418.7">2 Feb 22:40</text>
<text x="860.60" y="418.7">2 Feb 22:48</text>
<text x="905.68" y="418.7">2 Feb 22:56</text>
<text x="950.76" y="418.7">2 Feb 23:04</text>
<text x="15.2" y="85.2" textLength="27.80" lengthAdjust="spacingAndGlyphs">GOLD,M1</text>
<text x="47.7" y="85.2" textLength="23.40" lengthAdjust="spacingAndGlyphs">4658.37</text>
<text x="73.4" y="85.2" textLength="23.50" lengthAdjust="spacingAndGlyphs">4658.87</text>
<text x="99.2" y="85.2" textLength="23.00" lengthAdjust="spacingAndGlyphs">4657.31</text>
<text x="124.2" y="85.2" textLength="23.00" lengthAdjust="spacingAndGlyphs">4657.95</text>
</g>
<path d="M6.3 81.3h5l-2.5 2.6z" fill="#fff"/>
<rect x="990.3" y="268.3" width="28.2" height="8.2" fill="#fff"/>
<text x="993.6" y="274.9" font-family="Liberation Sans, Arial, sans-serif" font-size="6.4" fill="#000">4657.95</text>
</svg>
</div>
<div class="terminal">
<svg width="1024" height="184" viewBox="0 424 1024 184" font-family="Liberation Sans, Noto Sans CJK JP, sans-serif">
<rect x="1.2" y="438.2" width="9.3" height="169.5" fill="#ccdcf0"/>
<path d="M3.8 430.3l3.5 3.5M7.3 430.3l-3.5 3.5" stroke="#111" stroke-width="1.2"/>
<rect x="11.3" y="428.3" width="1009.6" height="163.4" fill="#fff"/>
<path d="M1020.9 428.2H11.3V591.5" stroke="#8e8e8e" stroke-width="0.8" fill="none"/>
<path d="M11 592.1H1020.9" stroke="#484848" stroke-width="1.2" fill="none"/>
<path d="M111.2 429.5V444.8 M249 429.5V444.8 M318 429.5V444.8 M372.2 429.5V444.8 M441.3 429.5V444.8 M517.6 429.5V444.8 M594 429.5V444.8 M672 429.5V444.8 M748 429.5V444.8 M825 429.5V444.8 M901.5 429.5V444.8" stroke="#e3e3e3" stroke-width="0.8"/>
<path d="M11.6 445.6H1020.6" stroke="#ececec" stroke-width="0.7"/>
<text x="16.80" y="440.12" font-size="8.4" fill="#111" font-weight="500" textLength="31.90" lengthAdjust="spacingAndGlyphs">注文番号</text>
<text x="229.00" y="440.12" font-size="8.4" fill="#111" font-weight="500" textLength="16.70" lengthAdjust="spacingAndGlyphs">時間</text>
<text x="282.20" y="440.12" font-size="8.4" fill="#111" font-weight="500" textLength="31.50" lengthAdjust="spacingAndGlyphs">取引種別</text>
<text x="351.60" y="440.12" font-size="8.4" fill="#111" font-weight="500" textLength="16.60" lengthAdjust="spacingAndGlyphs">数量</text>
<text x="408.00" y="440.12" font-size="8.4" fill="#111" font-weight="500" textLength="30.00" lengthAdjust="spacingAndGlyphs">通貨ペア</text>
<text x="497.70" y="440.12" font-size="8.4" fill="#111" font-weight="500" textLength="15.90" lengthAdjust="spacingAndGlyphs">価格</text>
<text x="531.90" y="440.12" font-size="8.4" fill="#111" font-weight="500" textLength="58.80" lengthAdjust="spacingAndGlyphs">決済逆指値(S/L)</text>
<text x="616.60" y="440.12" font-size="8.4" fill="#111" font-weight="500" textLength="51.40" lengthAdjust="spacingAndGlyphs">決済指値(T/P)</text>
<text x="728.20" y="440.12" font-size="8.4" fill="#111" font-weight="500" textLength="15.60" lengthAdjust="spacingAndGlyphs">価格</text>
<text x="796.90" y="440.12" font-size="8.4" fill="#111" font-weight="500" textLength="23.20" lengthAdjust="spacingAndGlyphs">手数料</text>
<text x="873.20" y="440.12" font-size="8.4" fill="#111" font-weight="500" textLength="24.90" lengthAdjust="spacingAndGlyphs">スワップ</text>
<text x="999.40" y="440.12" font-size="8.4" fill="#111" font-weight="500" textLength="16.60" lengthAdjust="spacingAndGlyphs">損益</text>
<path d="M58.4 439.6l2.2-4.4" stroke="#6a6a6a" stroke-width="0.7"/>
<rect x="11.7" y="446" width="1009" height="12.8" fill="#cccccc"/>
<circle cx="19.4" cy="452.7" r="2.4" fill="#dcdcdc" stroke="#8c8c8c" stroke-width="0.7"/><path d="M19.4 451.4v1.4h1" stroke="#8c8c8c" stroke-width="0.5" fill="none"/>
<text x="27.60" y="455.72" font-size="8.4" fill="#111" font-weight="700" textLength="68.10" lengthAdjust="spacingAndGlyphs">残高: -115 688 JPY</text>
<text x="101.30" y="455.72" font-size="8.4" fill="#111" font-weight="700" textLength="78.00" lengthAdjust="spacingAndGlyphs">有効証拠金: -115 688</text>
<text x="184.30" y="455.72" font-size="8.4" fill="#111" font-weight="700" textLength="78.00" lengthAdjust="spacingAndGlyphs">余剰証拠金: -115 688</text>
<text x="1012.60" y="455.72" font-size="8.4" fill="#111" font-weight="700" textLength="3.80" lengthAdjust="spacingAndGlyphs">0</text>
<text transform="translate(9.2 606.3) rotate(-90)" font-size="9.2" font-weight="500" fill="#222" textLength="31.4" lengthAdjust="spacingAndGlyphs">ターミナル</text>
<path d="M13.4 592.6V605.8H44.4V592.6" fill="#fff" stroke="#3c3c3c" stroke-width="1.3"/>
<rect x="14" y="591" width="29.8" height="3" fill="#fff"/>
<text x="21.20" y="601.92" font-size="8.4" fill="#111" font-weight="500" textLength="15.20" lengthAdjust="spacingAndGlyphs">取引</text>
<text x="52.50" y="601.92" font-size="8.4" fill="#6e6e6e" textLength="32.20" lengthAdjust="spacingAndGlyphs">運用比率</text>
<text x="99.60" y="601.92" font-size="8.4" fill="#6e6e6e" textLength="33.20" lengthAdjust="spacingAndGlyphs">口座履歴</text>
<text x="147.70" y="601.92" font-size="8.4" fill="#6e6e6e" textLength="23.30" lengthAdjust="spacingAndGlyphs">ニュース</text>
<text x="185.30" y="601.92" font-size="8.4" fill="#6e6e6e" textLength="40.50" lengthAdjust="spacingAndGlyphs">アラーム設定</text>
<text x="240.00" y="601.92" font-size="8.4" fill="#6e6e6e" textLength="43.90" lengthAdjust="spacingAndGlyphs">メールボックス</text>
<text x="302.80" y="601.92" font-size="8.4" fill="#6e6e6e" textLength="29.20" lengthAdjust="spacingAndGlyphs">マーケット</text>
<text x="358.30" y="601.92" font-size="8.4" fill="#6e6e6e" textLength="15.90" lengthAdjust="spacingAndGlyphs">記事</text>
<text x="393.10" y="601.92" font-size="8.4" fill="#6e6e6e" textLength="29.20" lengthAdjust="spacingAndGlyphs">ライブラリ</text>
<text x="437.00" y="601.92" font-size="8.4" fill="#6e6e6e" textLength="37.50" lengthAdjust="spacingAndGlyphs">エキスパート</text>
<text x="488.40" y="601.92" font-size="8.4" fill="#6e6e6e" textLength="33.20" lengthAdjust="spacingAndGlyphs">操作履歴</text>
<path d="M92 594.6V604.1 M140 594.6V604.1 M178.3 594.6V604.1 M233.4 594.6V604.1 M295.5 594.6V604.1 M351 594.6V604.1 M385.8 594.6V604.1 M429.6 594.6V604.1 M481.1 594.6V604.1 M529.2 594.6V604.1" stroke="#6e6e6e" stroke-width="0.8"/>
<text x="285.30" y="604.59" font-size="7.2" fill="#e8242a" font-weight="700" textLength="3.70" lengthAdjust="spacingAndGlyphs">7</text>
<text x="333.80" y="604.59" font-size="7.2" fill="#e8242a" font-weight="700" textLength="9.70" lengthAdjust="spacingAndGlyphs">105</text>
<text x="375.90" y="604.59" font-size="7.2" fill="#e8242a" font-weight="700" textLength="2.60" lengthAdjust="spacingAndGlyphs">1</text>
</svg>
</div>
<div class="statusbar">
<svg width="1024" height="19" viewBox="0 608 1024 19" font-family="Liberation Sans, Noto Sans CJK JP, sans-serif">
<path d="M0 610.2H1024" stroke="#f8f8f8" stroke-width="0.8"/><path d="M0 609.4H1024" stroke="#c6c6c6" stroke-width="0.8"/>
<text x="2.70" y="621.92" font-size="8.4" fill="#111" font-weight="500" textLength="96.90" lengthAdjust="spacingAndGlyphs">F1キーでヘルプが表示されます</text>
<text x="526.60" y="621.92" font-size="8.4" fill="#111" font-weight="500" textLength="27.50" lengthAdjust="spacingAndGlyphs">Default</text>
<path d="M522 612.8V626 M604.6 612.8V626 M726.2 612.8V626 M776.3 612.8V626 M824.4 612.8V626 M872.6 612.8V626 M919.7 612.8V626" stroke="#acacac" stroke-width="0.8"/>
<rect x="923.20" y="614" width="1.45" height="7.10" fill="#7c9c34"/>
<rect x="923.20" y="621.10" width="1.45" height="2.20" fill="#1f5c86"/>
<rect x="925.30" y="614" width="1.45" height="6.30" fill="#7c9c34"/>
<rect x="925.30" y="620.30" width="1.45" height="3.00" fill="#1f5c86"/>
<rect x="927.40" y="614" width="1.45" height="5.50" fill="#7c9c34"/>
<rect x="927.40" y="619.50" width="1.45" height="3.80" fill="#1f5c86"/>
<rect x="929.50" y="614" width="1.45" height="4.70" fill="#7c9c34"/>
<rect x="929.50" y="618.70" width="1.45" height="4.60" fill="#1f5c86"/>
<rect x="931.60" y="614" width="1.45" height="3.90" fill="#7c9c34"/>
<rect x="931.60" y="617.90" width="1.45" height="5.40" fill="#1f5c86"/>
<rect x="933.70" y="614" width="1.45" height="3.10" fill="#7c9c34"/>
<rect x="933.70" y="617.10" width="1.45" height="6.20" fill="#1f5c86"/>
<rect x="935.80" y="614" width="1.45" height="2.30" fill="#7c9c34"/>
<rect x="935.80" y="616.30" width="1.45" height="7.00" fill="#1f5c86"/>
<rect x="937.90" y="614" width="1.45" height="1.50" fill="#7c9c34"/>
<rect x="937.90" y="615.50" width="1.45" height="7.80" fill="#1f5c86"/>
<text x="943.00" y="621.92" font-size="8.4" fill="#111" font-weight="500" textLength="63.70" lengthAdjust="spacingAndGlyphs">-1273404/7382 kb</text>
<path d="M1021 619l-6 6M1021 622l-3 3M1021 616l-9 9" stroke="#b8b8b8" stroke-width="0.8"/>
</svg>
</div>
<svg class="frame" width="1024" height="627" viewBox="0 0 1024 627"><path d="M0 0H1024V627H0z M1.1 0.8V625.8H1022.6V0.8z" fill="#4c5260" fill-rule="evenodd"/></svg>
</div>
</body></html>
